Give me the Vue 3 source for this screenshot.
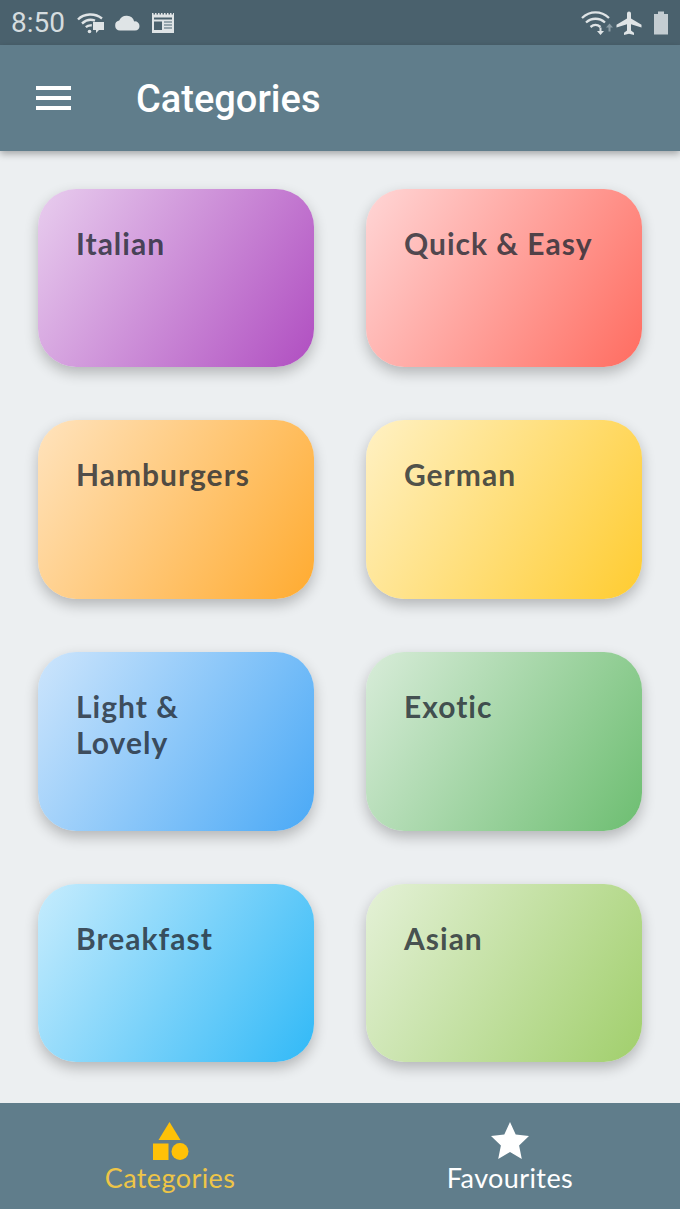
<script setup>
const categories = [
  { title: 'Italian', from: '#e8cdee', to: '#b04ec1' },
  { title: 'Quick & Easy', from: '#ffd6d6', to: '#ff6c60' },
  { title: 'Hamburgers', from: '#ffe3bd', to: '#ffab30' },
  { title: 'German', from: '#fff1c4', to: '#ffcc30' },
  { title: 'Light & Lovely', from: '#cde5fc', to: '#4aa9f6' },
  { title: 'Exotic', from: '#d8ecd9', to: '#6dbe71' },
  { title: 'Breakfast', from: '#c6ecfd', to: '#31b9f7' },
  { title: 'Asian', from: '#e4f1d7', to: '#a1cf6c' },
]
</script>

<template>
  <div class="screen">
    <div class="status">
      <span class="time">8:50</span>
      <svg class="ic wifi" width="28" height="22" viewBox="0 0 28 22" aria-hidden="true">
        <path d="M1 7.500C7 1.300 18 .8 25 6.500" fill="none" stroke="#dfe4e6" stroke-width="2.400"/>
        <path d="M5 11.500C9 7.800 14 7 18 8.600" fill="none" stroke="#dfe4e6" stroke-width="2.400"/>
        <path d="M8.800 15.200c2-1.700 4.200-2.100 6-1.700" fill="none" stroke="#dfe4e6" stroke-width="2.400"/>
        <circle cx="12.500" cy="19.500" r="1.800" fill="#dfe4e6"/>
        <path d="M16 10h11v8h-5l-3 3v-3h-3z" fill="#dfe4e6"/>
      </svg>
      <svg class="ic cloud" width="26" height="16" viewBox="0 0 26 16" aria-hidden="true">
        <path d="M6 15.500a5 5 0 0 1-.8-9.900A8 8 0 0 1 13 .8a7.600 7.600 0 0 1 7.200 5.600A4.600 4.600 0 0 1 25.500 11a4.600 4.600 0 0 1-4.500 4.500z" fill="#dfe4e6"/>
      </svg>
      <svg class="ic news" width="24" height="20" viewBox="0 0 24 20" aria-hidden="true">
        <path d="M1 0h1.500v1.500H4V0h1.500v1.500H7V0h1.500v1.500H10V0h1.500v1.500H13V0h1.500v1.500H16V0h1.500v1.500H19V0h1.500v1.500H22V0h1v20H1z" fill="#dfe4e6"/>
        <rect x="3" y="4.500" width="18" height="2" fill="#4a616d"/>
        <rect x="3" y="8.500" width="8" height="8.500" fill="#4a616d"/>
        <path d="M13 9h8M13 12h8M13 15h8" stroke="#7d909a" stroke-width="1.300"/>
      </svg>
      <span class="spacer"></span>
      <svg class="ic sys-wifi" width="34" height="26" viewBox="0 0 34 26" aria-hidden="true">
        <path d="M1 8C9 .5 20 .5 28 8" fill="none" stroke="#dfe4e6" stroke-width="2.300"/>
        <path d="M5 12.500c5.500-5 13.500-5 19 0" fill="none" stroke="#dfe4e6" stroke-width="2.300"/>
        <path d="M9.500 17c3-2.500 7-2.500 10 0" fill="none" stroke="#dfe4e6" stroke-width="2.300"/>
        <path d="M18.500 17.500v3.500h-2.500l3.500 4 3.500-4h-2.500v-3.500z" fill="#dfe4e6"/>
        <path d="M28.500 13.500l3.500 4h-2.500v4h-2v-4H25z" fill="#8c9da6"/>
      </svg>
      <svg class="ic plane" width="26" height="24" viewBox="0 0 26 24" aria-hidden="true">
        <path d="M25.500 16.500v-2.700L15 7.500V2.500a2 2 0 0 0-4 0v5L.5 13.800v2.700l10.500-3.200v6.200L8 21.700V24l5-1.300 5 1.300v-2.300l-3-2.200v-6.200z" fill="#dfe4e6"/>
      </svg>
      <svg class="ic" width="16" height="24" viewBox="0 0 16 24" aria-hidden="true">
        <path d="M5 .5h6V3h4v20.500H1V3h4z" fill="#c4cdd2"/>
      </svg>
    </div>

    <header class="appbar">
      <div class="burger"><i></i><i></i><i></i></div>
      <h1>Categories</h1>
    </header>

    <main class="grid">
      <div
        v-for="c in categories"
        :key="c.title"
        class="card"
        :style="{ backgroundImage: `linear-gradient(123deg, ${c.from}, ${c.to})` }"
      >
        <span class="label">{{ c.title }}</span>
      </div>
    </main>

    <nav class="tabs">
      <div class="tab active">
        <svg width="38" height="38" viewBox="0 0 38 38" aria-hidden="true">
          <path d="M18.500 0l11 18h-22z" fill="#ffc107"/>
          <rect x="2" y="21.500" width="15.500" height="16.500" fill="#ffc107"/>
          <circle cx="29" cy="29.500" r="8.500" fill="#ffc107"/>
        </svg>
        <span>Categories</span>
      </div>
      <div class="tab">
        <svg width="38" height="38" viewBox="0 0 38 38" aria-hidden="true">
          <path d="M19 0l5.700 12.600 13.300 1.500-9.900 9.300L30.800 37 19 30l-11.800 7 2.700-13.600L0 14.100l13.300-1.500z" fill="#fff"/>
        </svg>
        <span>Favourites</span>
      </div>
    </nav>
  </div>
</template>

<style scoped>
.screen {
  width: 680px;
  height: 1209px;
  display: flex;
  flex-direction: column;
  background: #eceff1;
  overflow: hidden;
}
.status {
  height: 45px;
  flex: none;
  display: flex;
  align-items: center;
  padding: 0 11px;
  background: #4a616d;
  color: #d5dcdf;
}
.time {
  font: 400 28px/45px Roboto, sans-serif;
  margin-right: 12px;
}
.ic {
  flex: none;
  margin-right: 5px;
}
.ic:last-child {
  margin-right: 0;
}
.wifi { margin-right: 9px; }
.cloud { margin-right: 11px; }
.sys-wifi { margin-right: 1px; }
.plane { margin-right: 11px; }
.spacer { flex: 1; }
.appbar {
  height: 106px;
  flex: none;
  display: flex;
  align-items: center;
  padding-left: 36px;
  background: #607d8b;
  box-shadow: 0 3px 7px rgba(0, 0, 0, 0.3);
  position: relative;
  z-index: 1;
}
.burger {
  width: 35px;
  display: flex;
  flex-direction: column;
  gap: 6px;
  margin-right: 65px;
}
.burger i {
  display: block;
  height: 4px;
  background: #fff;
}
h1 {
  margin: 4px 0 0;
  font: 500 38px/1.2 Roboto, sans-serif;
  color: #fff;
}
.grid {
  flex: 1;
  display: grid;
  grid-template-columns: 276px 276px;
  grid-auto-rows: 178.600px;
  column-gap: 52px;
  row-gap: 53px;
  padding: 37.800px 38px 0;
}
.card {
  border-radius: 38px;
  padding: 36px 38px;
  box-shadow: 0 6px 14px rgba(0, 0, 0, 0.24);
  box-sizing: border-box;
}
.label {
  display: block;
  font: 700 30px/36px Lato, sans-serif;
  letter-spacing: 1px;
  color: rgba(33, 40, 50, 0.8);
}
.tabs {
  height: 106px;
  flex: none;
  display: flex;
  background: #607d8b;
  position: relative;
  z-index: 1;
}
.tab {
  flex: 1;
  display: flex;
  flex-direction: column;
  align-items: center;
  padding-top: 19px;
  font: 400 27px/32px Lato, sans-serif;
  letter-spacing: 0.4px;
  color: #fff;
}
.tab svg {
  display: block;
  margin-bottom: 2px;
}
.tab.active {
  color: #eec547;
}
</style>
